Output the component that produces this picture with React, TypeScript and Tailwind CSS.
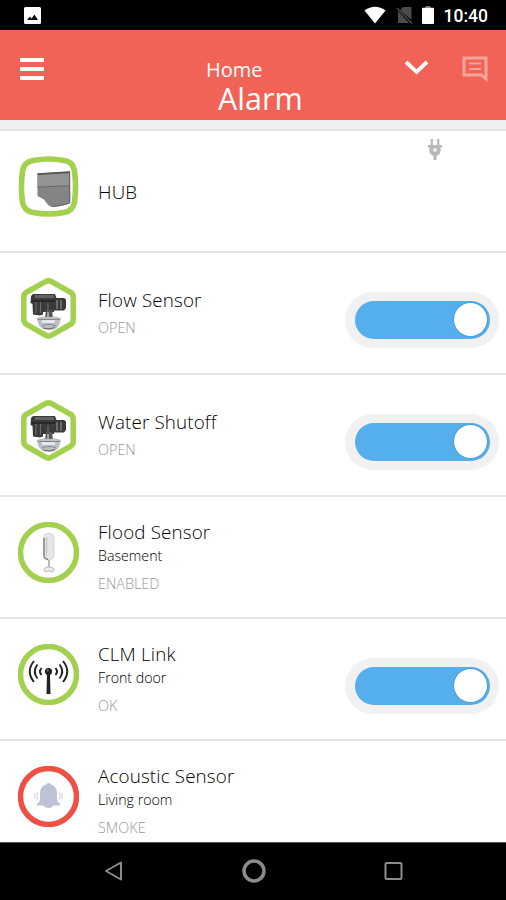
import { FC, ReactNode } from 'react';

interface Device {
  name: string;
  room?: string;
  status?: string;
  icon: ReactNode;
  isOn?: boolean;
  pluggedIn?: boolean;
}

const HubIcon = () => (
  <svg width="61" height="61" viewBox="0 0 61 61">
    <path
      d="M15 4.500 Q30.500 1.500 46 4.500 Q55 5.500 56.500 15 Q58.600 30.500 56.500 46 Q55 55 46 56.500 Q30.500 59.500 15 56.500 Q6 55 4.500 46 Q2.400 30.500 4.500 15 Q6 6 15 4.500Z"
      fill="#fff"
      stroke="#a3d04e"
      strokeWidth="5.600"
    />
    <path d="M19.500 17.500 L52 15.500 L52.300 47 Q44 50.500 34 51 Q30 50 26 43.500 L19.500 40Z" fill="#848484" />
    <path d="M19.500 19 L52 17 V30 L19.500 32Z" fill="#939393" />
    <path d="M19.500 18.200 L52 16.200" stroke="#555" strokeWidth="1.800" />
    <path d="M19.500 31.300 L52 29.500 M51.600 16 V46 M34 50.300 Q44 50 52 46.700" fill="none" stroke="#666" strokeWidth="1.100" />
  </svg>
);

const ValveIcon = () => (
  <svg width="61" height="61" viewBox="0 0 61 61">
    <path
      d="M27.500 3.700 Q30.500 2 33.500 3.700 L53 14.500 Q55.200 16 55.200 19 V41.500 Q55.200 44.500 53 46 L33.500 57.200 Q30.500 59 27.500 57.200 L8 46 Q5.800 44.500 5.800 41.500 V19 Q5.800 16 8 14.500Z"
      fill="#fff"
      stroke="#a3d04e"
      strokeWidth="5.500"
      strokeLinejoin="round"
    />
    <path d="M13 18 L15 16 H37 L38.500 20 H46 L48 21.500 V30 L46 32.500 H36 V34 H25 V36.500 L22 37.500 L15 36.500 L14.500 26 L12.500 25Z" fill="#3a3a3a" />
    <path d="M17 17 H36 V20 H17Z" fill="#626262" />
    <path d="M18 23 V35 M22.500 23 V35 M30 25 V33" stroke="#6a6a6a" strokeWidth="1.200" />
    <path d="M39 22 V31 M43 22 V31" stroke="#888" strokeWidth="1.300" />
    <path d="M14 23 H37" stroke="#222" strokeWidth="1.500" />
    <path d="M25.500 34.500 H28 V38 H25.500Z" fill="#fff" />
    <path d="M28 32 H34 L35 40 H27Z" fill="#555" />
    <path d="M30 34 V40" stroke="#ccc" strokeWidth="1.300" />
    <path d="M18.500 40 Q24 37.500 31 39 Q38 37.500 43 40 L41.500 46 Q39 52 31 52 Q22 52 20 45Z" fill="#bcc0c4" />
    <path d="M20 41.500 H42 M24 48 Q31 45 38 48" fill="none" stroke="#82878c" strokeWidth="1.200" />
    <path d="M24 43.500 H37" stroke="#eceef0" strokeWidth="2.500" />
    <path d="M25 50 Q31 52 37 49.500" fill="none" stroke="#666" />
  </svg>
);

const FloodIcon = () => (
  <svg width="61" height="61" viewBox="0 0 61 61">
    <circle cx="30.500" cy="30.500" r="28" fill="#fff" stroke="#a3d04e" strokeWidth="5.500" />
    <rect x="25.500" y="11.500" width="10.500" height="26" rx="4" fill="#e6e6e6" stroke="#d6d6d6" />
    <path d="M26 16 V34 Q26.500 37 30 37.500" fill="none" stroke="#868686" strokeWidth="1.500" />
    <path d="M28.500 15 V34" stroke="#c4c4c4" strokeWidth="1.300" />
    <path d="M31 38 V45" stroke="#aaa" strokeWidth="1.600" />
    <path d="M31 45 Q27 44.500 26 48 Q26.500 51 31 48.500 Q35.500 51 36 48 Q35 44.500 31 45Z" fill="#eee" stroke="#b5b5b5" strokeWidth="1" />
  </svg>
);

const AntennaIcon = () => (
  <svg width="61" height="61" viewBox="0 0 61 61">
    <circle cx="30.500" cy="30.500" r="28" fill="#fff" stroke="#a3d04e" strokeWidth="5.500" />
    <circle cx="30.500" cy="27.500" r="3.600" fill="#222" />
    <circle cx="29.700" cy="26.500" r="1" fill="#888" />
    <path d="M29 30 H32 L32.500 50 H28.500Z" fill="#222" />
    <g fill="none" stroke="#222" strokeWidth="1.900">
      <path d="M23.500 24 Q20.500 27.500 23.500 31 M19.500 20.500 Q14 27.500 19.500 34.500 M16 17 Q7.500 27.500 16 38" />
      <path d="M37.500 24 Q40.500 27.500 37.500 31 M41.500 20.500 Q47 27.500 41.500 34.500 M45 17 Q53.500 27.500 45 38" />
    </g>
  </svg>
);

const BellIcon = () => (
  <svg width="61" height="61" viewBox="0 0 61 61">
    <circle cx="30.500" cy="30.500" r="28" fill="#fff" stroke="#ee5046" strokeWidth="5.500" />
    <path
      d="M30.500 17 Q32.500 17 33 18.500 Q39 20.500 39 27 V33 Q39 36 42 37.500 V39.500 H35.500 Q34 42 30.500 42 Q27 42 25.500 39.500 H19 V37.500 Q22 36 22 33 V27 Q22 20.500 28 18.500 Q28.500 17 30.500 17Z"
      fill="#bfc2d5"
    />
    <path
      d="M20 26 Q18 30 20 34 M17.500 27 Q15.500 30 17.500 33 M41 26 Q43 30 41 34 M43.500 27 Q45.500 30 43.500 33"
      fill="none"
      stroke="#e0e1ea"
      strokeWidth="1.500"
    />
  </svg>
);

const PlugIcon = () => (
  <svg width="16" height="24" viewBox="0 0 16 24">
    <path d="M4.800 1 V8 M11.200 1 V8" stroke="#b8b8b8" strokeWidth="2.200" />
    <path d="M1 7 H15 V9.500 H13.500 V13 Q13 17 9.500 18 V22 H6.500 V18 Q3 17 2.500 13 V9.500 H1Z" fill="#b8b8b8" />
    <circle cx="8" cy="12" r="2" fill="#eee" />
  </svg>
);

const devices: Device[] = [
  { name: 'HUB', icon: <HubIcon />, pluggedIn: true },
  { name: 'Flow Sensor', status: 'OPEN', icon: <ValveIcon />, isOn: true },
  { name: 'Water Shutoff', status: 'OPEN', icon: <ValveIcon />, isOn: true },
  { name: 'Flood Sensor', room: 'Basement', status: 'ENABLED', icon: <FloodIcon /> },
  { name: 'CLM Link', room: 'Front door', status: 'OK', icon: <AntennaIcon />, isOn: true },
  { name: 'Acoustic Sensor', room: 'Living room', status: 'SMOKE', icon: <BellIcon /> },
];

const Toggle = () => (
  <button className="mt-[13px] mr-[7px] h-14 w-[154px] shrink-0 rounded-full bg-[#f1f1f1] pl-[10px]">
    <span className="flex h-[38px] w-[135px] items-center justify-end rounded-full bg-[#55afec] pr-[3px]">
      <span className="h-[33px] w-[33px] rounded-full bg-white shadow-[0_0_2px_rgba(0,0,0,0.3)]" />
    </span>
  </button>
);

const DeviceRow: FC<{ device: Device }> = ({ device }) => (
  <li className="flex h-[122px] shrink-0 items-center border-b-2 border-[#e3e3e3] bg-white">
    <div className="mb-[9px] ml-[18px] shrink-0">{device.icon}</div>
    <div className="ml-[19px] flex-1 pt-px whitespace-nowrap">
      <div className="text-[18.8px] leading-6 font-light tracking-[0.15px] text-black">{device.name}</div>
      {device.room && <div className="text-[14.2px] leading-6 font-light text-black">{device.room}</div>}
      {device.status && <div className="pt-1 text-[14.4px] leading-6 font-light text-[#999]">{device.status}</div>}
    </div>
    {device.isOn && <Toggle />}
    {device.pluggedIn && (
      <div className="mr-[63px] self-start pt-[7px]">
        <PlugIcon />
      </div>
    )}
  </li>
);

const StatusBar = () => (
  <div className="flex h-[30px] shrink-0 items-center bg-black pr-[18px] pl-6">
    <svg width="17" height="17" viewBox="0 0 17 17">
      <rect width="17" height="17" rx="1.500" fill="#fff" />
      <path d="M3 13 L6 9.500 L7.500 11.500 L10.500 7.500 L14 13Z" fill="#111" />
    </svg>
    <div className="ml-auto flex items-center">
      <svg width="22" height="18" viewBox="0 0 22 18">
        <path d="M0.500 4.500 Q11 -3 21.500 4.500 L11 17.500Z" fill="#fff" />
      </svg>
      <svg className="ml-2.5" width="17" height="18" viewBox="0 0 17 18">
        <path d="M4 4 L7 1 H15.500 V14Z M2 5 L13 17 H2Z" fill="#4b4b4b" />
        <path d="M1 2 L16 17.500" stroke="#4b4b4b" strokeWidth="1.500" />
      </svg>
      <svg className="ml-[9px]" width="12" height="18" viewBox="0 0 12 18">
        <path d="M3.500 0 H8.500 V2 H3.500Z" fill="#777" />
        <rect y="1.800" width="12" height="16.200" rx="1" fill="#fff" />
      </svg>
      <span className="ml-[10px] pt-[3px] font-[Roboto,sans-serif] text-[17.5px] leading-none font-medium text-white">10:40</span>
    </div>
  </div>
);

const Header = () => (
  <header className="flex h-[90px] shrink-0 items-start bg-[#f16356] text-white">
    <button className="mt-[28px] ml-5 flex w-[100px] flex-col gap-[5px]">
      <span className="h-1 w-6 rounded-[1px] bg-white" />
      <span className="h-1 w-6 rounded-[1px] bg-white" />
      <span className="h-1 w-6 rounded-[1px] bg-white" />
    </button>
    <div className="ml-[86px] w-[110px] whitespace-nowrap">
      <div className="pt-[26px] text-[20px] leading-[27px]">Home</div>
      <div className="ml-[12px] text-[30.5px] leading-[31px]">Alarm</div>
    </div>
    <svg className="mt-[29px] ml-[88px]" width="25" height="17" viewBox="0 0 25 17">
      <path d="M2 3 L12.500 13 L23 3" fill="none" stroke="#fff" strokeWidth="3.800" />
    </svg>
    <svg className="mt-[26px] ml-[33px]" width="26" height="26" viewBox="0 0 26 26">
      <path d="M2 2 H24 V23 L19.500 19 H2Z" fill="none" stroke="#f4a49c" strokeWidth="3" />
      <path d="M7 7.500 H19 M7 13 H19" stroke="#f4a49c" strokeWidth="2" />
    </svg>
  </header>
);

const NavBar = () => (
  <nav className="flex h-[58px] shrink-0 items-center justify-between border-t border-[#555] bg-black pr-[103px] pb-[2px] pl-[104px]">
    <svg width="19" height="20" viewBox="0 0 19 20">
      <path d="M17 1.500 V18.500 L2 10Z" fill="none" stroke="#8b8b8b" strokeWidth="2" strokeLinejoin="round" />
    </svg>
    <svg width="24" height="24" viewBox="0 0 24 24">
      <circle cx="12" cy="12" r="10" fill="none" stroke="#8b8b8b" strokeWidth="3.500" />
    </svg>
    <svg width="19" height="18" viewBox="0 0 19 18">
      <rect x="1.500" y="1" width="16" height="16" rx="1" fill="none" stroke="#8b8b8b" strokeWidth="2" />
    </svg>
  </nav>
);

export default function App() {
  return (
    <div className="flex h-[900px] w-[506px] flex-col overflow-hidden bg-white font-['Open_Sans','Noto_Sans',sans-serif]">
      <StatusBar />
      <Header />
      <div className="h-[11px] shrink-0 border-b-2 border-[#e3e2e1] bg-[#f1f0ef]" />
      <ul className="flex min-h-0 flex-1 flex-col overflow-hidden">
        {devices.map(device => (
          <DeviceRow key={device.name} device={device} />
        ))}
      </ul>
      <NavBar />
    </div>
  );
}
